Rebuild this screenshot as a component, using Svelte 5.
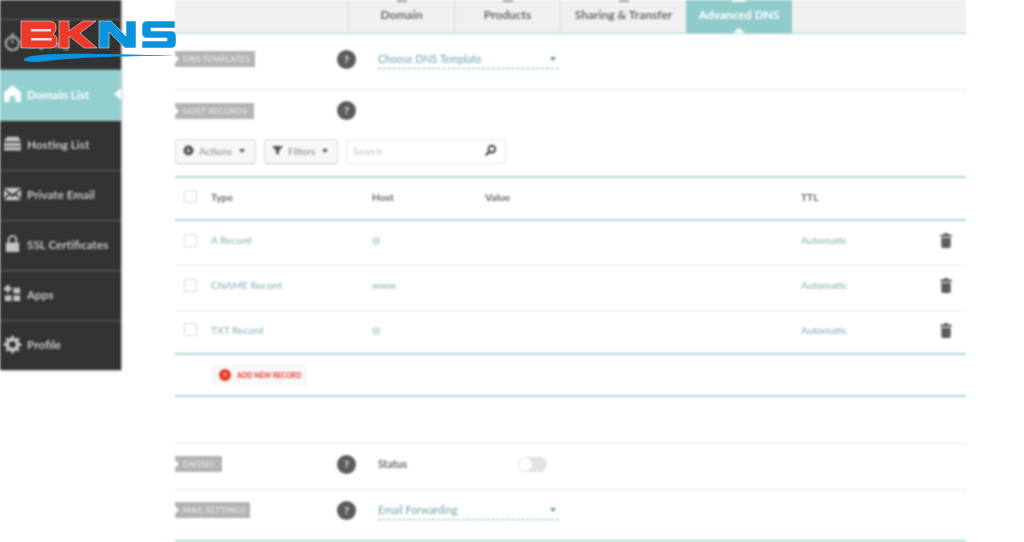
<script>
	const nav = [
		{ label: '', icon: 'none' },
		{ label: 'Expiring', icon: 'clock' },
		{ label: 'Domain List', icon: 'home', active: true },
		{ label: 'Hosting List', icon: 'server' },
		{ label: 'Private Email', icon: 'mail' },
		{ label: 'SSL Certificates', icon: 'lock' },
		{ label: 'Apps', icon: 'apps' },
		{ label: 'Profile', icon: 'gear' }
	];

	const tabs = ['Domain', 'Products', 'Sharing & Transfer', 'Advanced DNS'];

	const records = [
		{ type: 'A Record', host: '@' },
		{ type: 'CNAME Record', host: 'www' },
		{ type: 'TXT Record', host: '@' }
	];
</script>

<div class="page">
	<aside class="sidebar">
		{#each nav as item}
			<div class="nav-item" class:active={item.active}>
				<svg class="nav-icon" viewBox="0 0 20 20" aria-hidden="true">
					{#if item.icon === 'clock'}
						<circle cx="10" cy="11" r="7" fill="none" stroke="#aaa" stroke-width="2.4" />
						<path d="M8 1.500h4M10 11V7" stroke="#aaa" stroke-width="2" />
					{:else if item.icon === 'home'}
						<path d="M10 1 1 9v10h6v-6h6v6h6V9z" fill="#fff" />
					{:else if item.icon === 'server'}
						<path d="M4 3h12l3 5H1z" fill="#c4c4c4" />
						<rect x="1" y="9.500" width="18" height="3.400" fill="#c4c4c4" />
						<rect x="1" y="14" width="18" height="3.400" fill="#c4c4c4" />
					{:else if item.icon === 'mail'}
						<path d="M1 4h18L10 11zM1 6l5 4-5 5zM19 6l-5 4 5 5zM1 17l6-5.500 3 2.500 3-2.500 6 5.500z" fill="#c4c4c4" />
					{:else if item.icon === 'lock'}
						<rect x="3" y="9" width="14" height="10" fill="#c4c4c4" />
						<path d="M6 9V6a4 4 0 0 1 8 0v3" fill="none" stroke="#c4c4c4" stroke-width="2" />
					{:else if item.icon === 'apps'}
						<path d="M5 1v8M1 5h8" stroke="#c4c4c4" stroke-width="3" />
						<rect x="11" y="4" width="7" height="6" fill="#c4c4c4" />
						<rect x="2" y="12" width="7" height="6" fill="#c4c4c4" />
						<rect x="11" y="12" width="7" height="6" fill="#c4c4c4" />
					{:else if item.icon === 'gear'}
						<circle cx="10" cy="10" r="5.500" fill="none" stroke="#c4c4c4" stroke-width="4" />
						<path d="M10 0.500v19M0.500 10h19M3.300 3.300l13.400 13.400M16.700 3.300 3.300 16.700" stroke="#c4c4c4" stroke-width="2.600" stroke-dasharray="3.500 12 3.500" />
					{/if}
				</svg>
				<span>{item.label}</span>
			</div>
		{/each}
	</aside>

	<main class="main">
		<nav class="tabs">
			{#each tabs as tab, i}
				<div class="tab" class:current={i === 3}><i class="tab-mark"></i>{tab}</div>
			{/each}
		</nav>

		<section class="row templates">
			<span class="tag">DNS Templates</span>
			<span class="help">?</span>
			<div class="select"><span>Choose DNS Template</span><i class="caret"></i></div>
		</section>

		<section class="row hosts">
			<span class="tag">Host Records</span>
			<span class="help">?</span>
		</section>

		<div class="toolbar">
			<button class="btn"><svg class="funnel" viewBox="0 0 12 12"><circle cx="6" cy="6" r="5.500" fill="#555" /><path d="M4.500 3.500v5l4-2.500z" fill="#ddd" /></svg>Actions<i class="caret dark"></i></button>
			<button class="btn"><svg class="funnel" viewBox="0 0 12 12"><path d="M0 1h12L7.500 6.500V11l-3-1.500v-3z" fill="#555" /></svg>Filters<i class="caret dark"></i></button>
			<div class="search">
				<span>Search</span>
				<svg viewBox="0 0 14 14"><circle cx="8.500" cy="5.500" r="3.600" fill="none" stroke="#444" stroke-width="2" /><path d="M6 8 2 12" stroke="#444" stroke-width="2.400" /></svg>
			</div>
		</div>

		<div class="table">
			<div class="tr head">
				<span class="check"></span>
				<span class="c-type">Type</span>
				<span class="c-host">Host</span>
				<span class="c-value">Value</span>
				<span class="c-ttl">TTL</span>
			</div>
			{#each records as rec}
				<div class="tr record">
					<span class="check"></span>
					<span class="c-type">{rec.type}</span>
					<span class="c-host">{rec.host}</span>
					<span class="c-value"></span>
					<span class="c-ttl">Automatic</span>
					<svg class="trash" viewBox="0 0 12 16"><path d="M4 0h4v1.500h4V4H0V1.500h4zM1 5h10v9.500a1.500 1.500 0 0 1-1.500 1.500h-7A1.500 1.500 0 0 1 1 14.500z" fill="#5c5c5c" /></svg>
				</div>
			{/each}
		</div>

		<div class="add-row">
			<div class="add"><span class="plus">+</span>ADD NEW RECORD</div>
		</div>

		<section class="row dnssec">
			<span class="tag">DNSSEC</span>
			<span class="help">?</span>
			<span class="status">Status</span>
			<span class="toggle"><i></i></span>
		</section>

		<section class="row mail">
			<span class="tag">Mail Settings</span>
			<span class="help">?</span>
			<div class="select"><span>Email Forwarding</span><i class="caret"></i></div>
		</section>
	</main>
</div>

<div class="logo">
	<svg viewBox="0 0 156 44" width="156" height="44" aria-label="BKNS logo">
		<g stroke="#fff" stroke-width="0.5">
			<path d="M1 1h28q7 0 7 6v2q0 3-3 5 4 2 4 5v3q0 6-7 6H1z" fill="#ee3a29" />
			<path d="M39 1h10v10L63 1h13L60 13l17 15H64L49 16v12H39z" fill="#ee3a29" />
			<path d="M79 28V1h12l15 15V1h10v27h-11L89 12v16z" fill="#0a93dc" />
			<path d="M127 1h28v7h-24v3h20q5 0 5 5v7q0 5-5 5h-29v-7h25v-3h-20q-5 0-5-5V6q0-5 5-5z" fill="#0a93dc" />
		</g>
		<path d="M11 9h20v2.500H11zM11 18h21v2.500H11z" fill="#e2e2e2" />
		<path d="M4 39C10 34 40 32 155 36 100 35.500 50 38 28 41 14 43 2 42 4 39z" fill="#0a93dc" />
	</svg>
</div>

<style>
	:global(body) {
		margin: 0;
		background: #fff;
		overflow: hidden;
	}

	.page {
		display: flex;
		width: 1024px;
		height: 542px;
		overflow: hidden;
		font-family: Lato, 'Liberation Sans', sans-serif;
		color: #666;
		filter: blur(0.85px);
	}

	/* Sidebar */
	.sidebar {
		width: 121px;
		height: 400px;
		margin-top: -30px;
		flex-shrink: 0;
		background: #333;
		box-shadow: 1px 1px 2px rgba(0, 0, 0, 0.25);
	}

	.nav-item {
		position: relative;
		display: flex;
		align-items: center;
		gap: 5px;
		height: 50px;
		box-sizing: border-box;
		padding: 0 0 4px 3px;
		border-bottom: 1px solid #666;
		font-size: 11.700px;
		font-weight: 700;
		color: #c6c6c6;
		white-space: nowrap;
	}

	.nav-item:last-child {
		border-bottom: 0;
	}

	.nav-item.active {
		height: 51px;
		background: #93cfcf;
		color: #fff;
		border-bottom: 0;
	}

	.nav-item.active::after {
		content: '';
		position: absolute;
		right: 0;
		top: 18px;
		border: 6px solid transparent;
		border-right: 7px solid #fff;
		border-left: 0;
	}

	.nav-icon {
		width: 19px;
		height: 19px;
		flex-shrink: 0;
	}

	/* Main */
	.main {
		width: 791px;
		margin-left: 54px;
		flex-shrink: 0;
	}

	.tabs {
		display: flex;
		height: 33px;
		padding-left: 173px;
		background: #f0f0f0;
		border-bottom: 1px solid #a9d6d6;
	}

	.tab {
		position: relative;
		width: 105px;
		border-left: 1px solid #dcdcdc;
		font-size: 12px;
		font-weight: 700;
		color: #6a6a6a;
		text-align: center;
		line-height: 30px;
		white-space: nowrap;
	}

	.tab:nth-child(3) {
		width: 125px;
	}

	.tab.current {
		background: #8fcbcb;
		color: #fff;
		border-left: 0;
		width: 106px;
	}

	.tab.current::after {
		content: '';
		position: absolute;
		left: 47px;
		bottom: 0;
		border: 6px solid transparent;
		border-bottom: 5px solid #fff;
		border-top: 0;
	}

	/* bottom edge of the tab icons, cut off by the top of the window */
	.tab-mark {
		position: absolute;
		left: 50%;
		top: 0;
		width: 10px;
		height: 2px;
		margin-left: -5px;
		background: #999;
	}

	.tab.current .tab-mark {
		width: 14px;
		margin-left: -7px;
		background: #e4f3f3;
	}

	.row {
		display: flex;
		align-items: center;
		box-sizing: border-box;
		border-bottom: 1px solid #e4e4e4;
	}

	.templates {
		height: 56px;
		padding-bottom: 5px;
	}

	.hosts {
		height: 40px;
		padding-top: 1px;
		border-bottom: 0;
	}

	.tag {
		position: relative;
		box-sizing: border-box;
		width: 162px;
		height: 16px;
		padding-left: 8px;
		flex-shrink: 0;
		display: flex;
		align-items: center;
		background: linear-gradient(#b3b3b6, #b3b3b6) no-repeat 0 0 / var(--w, 80px) 100%;
		font-size: 8px;
		font-weight: 400;
		text-transform: uppercase;
		letter-spacing: 0.35px;
		color: #eee;
	}

	.templates .tag { --w: 80px; }
	.hosts .tag { --w: 79px; }
	.dnssec .tag { --w: 47px; }
	.mail .tag { --w: 75px; }

	.tag::before {
		content: '';
		position: absolute;
		left: 0;
		top: 4px;
		border: 4px solid transparent;
		border-left: 4px solid #fff;
		border-right: 0;
	}

	.help {
		width: 19px;
		height: 19px;
		border-radius: 50%;
		flex-shrink: 0;
		background: #5c5c5c;
		color: #eee;
		font-size: 10px;
		font-weight: 900;
		line-height: 19px;
		text-align: center;
	}

	.select {
		display: flex;
		align-items: center;
		justify-content: space-between;
		box-sizing: border-box;
		width: 181px;
		height: 19px;
		margin-left: 22px;
		padding-right: 3px;
		border-bottom: 1px dashed #7fb3b3;
		font-size: 10.500px;
		color: #6fa5a5;
	}

	.caret {
		border: 3.500px solid transparent;
		border-top: 4px solid #5f8f8f;
		border-bottom: 0;
	}

	.caret.dark {
		border-top-color: #555;
		margin-left: 7px;
	}

	/* Toolbar */
	.toolbar {
		display: flex;
		align-items: center;
		gap: 8px;
		height: 25px;
		margin-top: 9px;
		margin-bottom: 12px;
	}

	.btn {
		display: flex;
		align-items: center;
		box-sizing: border-box;
		height: 25px;
		width: 81px;
		padding: 0 0 2px 7px;
		background: #f7f7f7;
		border: 1px solid #dcdcdc;
		border-radius: 3px;
		box-shadow: 0 1px 1px rgba(0, 0, 0, 0.08);
		font-family: inherit;
		font-size: 10px;
		color: #888;
	}

	.btn:nth-child(2) {
		width: 74px;
	}

	.funnel {
		width: 11px;
		height: 11px;
		margin-right: 5px;
	}

	.search {
		display: flex;
		align-items: center;
		justify-content: space-between;
		box-sizing: border-box;
		width: 160px;
		height: 25px;
		padding: 0 8px 2px 6px;
		border: 1px solid #e4e4e4;
		border-radius: 3px;
		font-size: 10px;
		color: #c4c4c4;
	}

	.search svg {
		width: 13px;
		height: 13px;
	}

	/* Table */
	.table {
		border-top: 2px solid #abd8d8;
	}

	.tr {
		position: relative;
		display: grid;
		grid-template-columns: 36px 161px 113px 316px 1fr;
		align-items: center;
		box-sizing: border-box;
		font-size: 10.200px;
	}

	.head {
		height: 43px;
		padding-bottom: 4px;
		border-bottom: 2px solid #abd8d8;
		font-weight: 700;
		color: #666;
	}

	.record {
		height: 45px;
		padding-bottom: 6px;
		border-bottom: 1px solid #ececec;
		color: #7fb0b0;
	}

	.record:last-child {
		height: 44px;
		padding-bottom: 5px;
		border-bottom: 2px solid #abd8d8;
	}

	.check {
		width: 11px;
		height: 11px;
		margin-left: 9px;
		border: 1px solid #d8d8d8;
		border-radius: 2px;
	}

	.trash {
		position: absolute;
		right: 14px;
		top: 12px;
		width: 12px;
		height: 15px;
	}

	/* Add record */
	.add-row {
		height: 42px;
		padding-top: 9px;
		box-sizing: border-box;
		border-bottom: 2px solid #abd8d8;
		margin-bottom: 46px;
	}

	.add {
		display: flex;
		align-items: center;
		gap: 6px;
		box-sizing: border-box;
		width: 96px;
		height: 22px;
		margin-left: 36px;
		padding-left: 8px;
		border-radius: 3px;
		background: #f8f8f8;
		font-size: 7px;
		font-weight: 900;
		color: #e8473a;
		white-space: nowrap;
	}

	.plus {
		width: 12px;
		height: 12px;
		border-radius: 50%;
		background: #e8392b;
		color: #f8a9a0;
		font-size: 9px;
		line-height: 12px;
		text-align: center;
	}

	/* Bottom rows */
	.dnssec {
		height: 47px;
		padding-bottom: 5px;
		border-top: 1px solid #e8e8e8;
	}

	.mail {
		height: 52px;
		padding-bottom: 10px;
		border-bottom: 2px solid #abd8d8;
	}

	.status {
		margin-left: 22px;
		width: 140px;
		font-size: 10.500px;
		font-weight: 700;
		color: #666;
	}

	.toggle {
		display: flex;
		align-items: center;
		width: 29px;
		height: 15px;
		border-radius: 8px;
		background: #e2e2e2;
	}

	.toggle i {
		width: 13px;
		height: 13px;
		margin-left: 1px;
		border-radius: 50%;
		background: #fff;
	}

	/* Logo sits over everything */
	.logo {
		position: absolute;
		left: 20px;
		top: 20px;
		width: 156px;
		height: 44px;
		filter: blur(0.4px);
	}
</style>
